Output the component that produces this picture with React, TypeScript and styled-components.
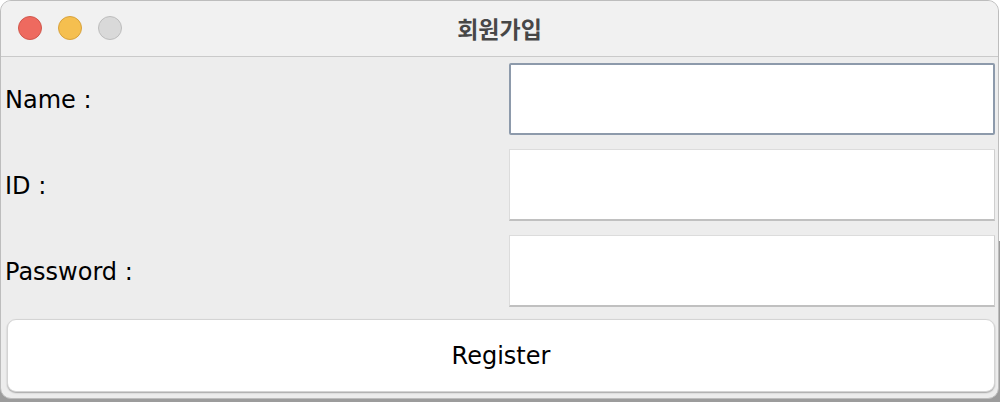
import React from "react";
import styled, { createGlobalStyle } from "styled-components";

const Global = createGlobalStyle`
  html, body { margin: 0; padding: 0; }
  body {
    width: 1000px;
    height: 402px;
    overflow: hidden;
    background: linear-gradient(#ffffff 0, #ffffff 60%, #9c9c9c 60%, #9c9c9c 100%);
    font-family: "DejaVu Sans", "Liberation Sans", sans-serif;
  }
`;

const Window = styled.div`
  box-sizing: border-box;
  width: 999px;
  height: 399px;
  border: 1px solid #bdbdbd;
  border-radius: 11px;
  overflow: hidden;
  background: #ededed;
  display: flex;
  flex-direction: column;
`;

const TitleBar = styled.div`
  position: relative;
  height: 55px;
  flex: none;
  background: #f1f1f1;
  border-bottom: 1px solid #cacaca;
  display: flex;
  align-items: center;
  justify-content: center;
`;

const Lights = styled.div`
  position: absolute;
  left: 17px;
  top: 15px;
  display: flex;
  gap: 16px;
`;

const Light = styled.span<{ $fill: string; $stroke: string }>`
  box-sizing: border-box;
  width: 24px;
  height: 24px;
  border-radius: 50%;
  background: ${(p) => p.$fill};
  border: 1px solid ${(p) => p.$stroke};
`;

const Title = styled.h1`
  margin: 0;
  font-family: "Noto Sans CJK KR", sans-serif;
  font-weight: 700;
  font-size: 23px;
  color: #474747;
  line-height: 1;
  transform: translateY(0px);
`;

const Body = styled.div`
  flex: 1;
  display: flex;
  flex-direction: column;
  padding: 6px 3px 0 3px;
`;

const Form = styled.div`
  display: grid;
  grid-template-columns: 1fr 486px;
  grid-auto-rows: 72px;
  row-gap: 14px;
`;

const Label = styled.label`
  display: flex;
  align-items: center;
  font-size: 24px;
  color: #000;
  padding-top: 2px;
  padding-left: 1px;
`;

const Field = styled.input<{ $focused?: boolean }>`
  box-sizing: border-box;
  width: 486px;
  height: 72px;
  margin: 0;
  outline: none;
  background: #fff;
  font-size: 24px;
  ${(p) =>
    p.$focused
      ? `border: 2px solid #8d9aab; border-radius: 2px;`
      : `border: 1px solid #dcdcdc; border-bottom: 2px solid #c0c0c0; border-right: 1px solid #cfcfcf;`}
`;

const Button = styled.button`
  box-sizing: border-box;
  margin: 12px 0 0 3px;
  width: 988px;
  height: 73px;
  border-radius: 9px;
  border: 1px solid #d4d4d4;
  background: #fff;
  box-shadow: 0 1px 1.5px rgba(0, 0, 0, 0.3);
  font-family: "DejaVu Sans", sans-serif;
  font-size: 24px;
  color: #000;
  padding: 0;
`;

export default function App() {
  return (
    <>
      <Global />
      <Window>
        <TitleBar>
          <Lights>
            <Light $fill="#ee6a5f" $stroke="#d1574c" />
            <Light $fill="#f5bf4f" $stroke="#d8a23c" />
            <Light $fill="#d9d9d9" $stroke="#bdbdbd" />
          </Lights>
          <Title>회원가입</Title>
        </TitleBar>
        <Body>
          <Form>
            <Label>Name :</Label>
            <Field $focused />
            <Label>ID :</Label>
            <Field />
            <Label>Password :</Label>
            <Field type="password" />
          </Form>
          <Button>Register</Button>
        </Body>
      </Window>
    </>
  );
}
